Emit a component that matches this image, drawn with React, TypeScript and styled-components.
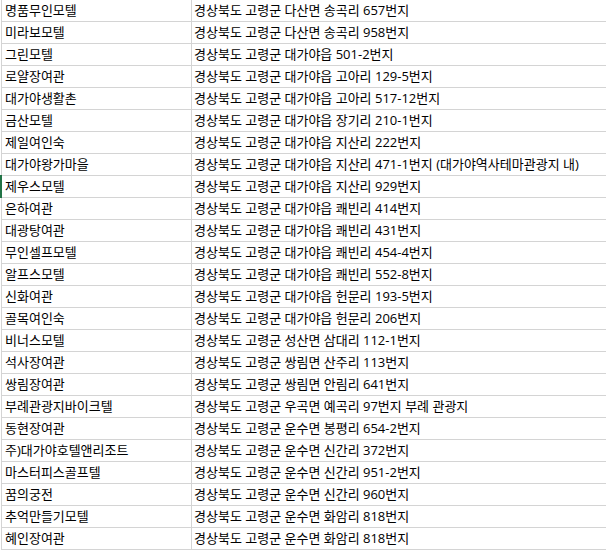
import React from "react";
import styled, { createGlobalStyle } from "styled-components";

const GlobalStyle = createGlobalStyle`
  html, body {
    margin: 0;
    padding: 0;
    background: #ffffff;
  }
  body {
    font-family: "Open Sans", "Noto Sans CJK KR", sans-serif;
  }
`;

type Lodging = { name: string; address: string };

const rows: Lodging[] = [
  { name: "명품무인모텔", address: "경상북도 고령군 다산면 송곡리 657번지" },
  { name: "미라보모텔", address: "경상북도 고령군 다산면 송곡리 958번지" },
  { name: "그린모텔", address: "경상북도 고령군 대가야읍 501-2번지" },
  { name: "로얄장여관", address: "경상북도 고령군 대가야읍 고아리 129-5번지" },
  { name: "대가야생활촌", address: "경상북도 고령군 대가야읍 고아리 517-12번지" },
  { name: "금산모텔", address: "경상북도 고령군 대가야읍 장기리 210-1번지" },
  { name: "제일여인숙", address: "경상북도 고령군 대가야읍 지산리 222번지" },
  {
    name: "대가야왕가마을",
    address: "경상북도 고령군 대가야읍 지산리 471-1번지 (대가야역사테마관광지 내)",
  },
  { name: "제우스모텔", address: "경상북도 고령군 대가야읍 지산리 929번지" },
  { name: "은하여관", address: "경상북도 고령군 대가야읍 쾌빈리 414번지" },
  { name: "대광탕여관", address: "경상북도 고령군 대가야읍 쾌빈리 431번지" },
  { name: "무인셀프모텔", address: "경상북도 고령군 대가야읍 쾌빈리 454-4번지" },
  { name: "알프스모텔", address: "경상북도 고령군 대가야읍 쾌빈리 552-8번지" },
  { name: "신화여관", address: "경상북도 고령군 대가야읍 헌문리 193-5번지" },
  { name: "골목여인숙", address: "경상북도 고령군 대가야읍 헌문리 206번지" },
  { name: "비너스모텔", address: "경상북도 고령군 성산면 삼대리 112-1번지" },
  { name: "석사장여관", address: "경상북도 고령군 쌍림면 산주리 113번지" },
  { name: "쌍림장여관", address: "경상북도 고령군 쌍림면 안림리 641번지" },
  { name: "부례관광지바이크텔", address: "경상북도 고령군 우곡면 예곡리 97번지 부례 관광지" },
  { name: "동현장여관", address: "경상북도 고령군 운수면 봉평리 654-2번지" },
  { name: "주)대가야호텔앤리조트", address: "경상북도 고령군 운수면 신간리 372번지" },
  { name: "마스터피스골프텔", address: "경상북도 고령군 운수면 신간리 951-2번지" },
  { name: "꿈의궁전", address: "경상북도 고령군 운수면 신간리 960번지" },
  { name: "추억만들기모텔", address: "경상북도 고령군 운수면 화암리 818번지" },
  { name: "혜인장여관", address: "경상북도 고령군 운수면 화암리 818번지" },
];

const Sheet = styled.div`
  width: 606px;
  height: 550px;
  overflow: hidden;
  padding-left: 1px;
  box-sizing: border-box;
  display: flex;
  flex-direction: column;
`;

const Row = styled.div`
  display: grid;
  grid-template-columns: 191px 1fr;
  height: 22px;
  flex: none;
  box-sizing: border-box;
  border-bottom: 1px solid #d4d4d4;
`;

const Cell = styled.div`
  box-sizing: border-box;
  font-size: 13px;
  line-height: 21px;
  color: #000000;
  white-space: nowrap;
  overflow: visible;
`;

const NameCell = styled(Cell)<{ $active?: boolean }>`
  position: relative;
  border-left: 1px solid #d4d4d4;
  border-right: 1px solid #d4d4d4;
  padding-left: 3px;

  &::before {
    content: "";
    display: ${(p) => (p.$active ? "block" : "none")};
    position: absolute;
    left: -2px;
    top: -1px;
    bottom: -1px;
    width: 2px;
    background: #217346;
  }
`;

const AddressCell = styled(Cell)`
  padding-left: 2px;
`;

export default function App() {
  return (
    <>
      <GlobalStyle />
      <Sheet>
        {rows.map((r, i) => (
          <Row key={i}>
            <NameCell $active={i === 8}>{r.name}</NameCell>
            <AddressCell>{r.address}</AddressCell>
          </Row>
        ))}
      </Sheet>
    </>
  );
}
